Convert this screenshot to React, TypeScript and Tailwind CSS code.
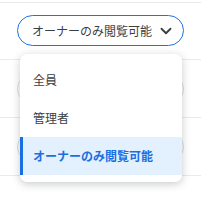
import React from 'react';
import { ChevronDown } from 'lucide-react';

const options = ['全員', '管理者', 'オーナーのみ閲覧可能'];

export default function App() {
  const selected = 2;

  return (
    <div
      className="relative w-[201px] h-[209px] bg-white overflow-hidden"
      style={{ fontFamily: '"Noto Sans CJK JP", "Noto Sans", sans-serif' }}
    >
      <div className="pt-[2px]">
        <div className="border-t border-[#e8eaed]" />
        {/* Trigger */}
        <div className="px-[17px] pt-[12px] pb-[13px]">
          <button className="flex items-center justify-between w-[167px] h-[31px] rounded-full border border-[#1a73e8] pl-[14px] pr-[8px] text-[12px] text-[#3c4043]">
            <span>オーナーのみ閲覧可能</span>
            <ChevronDown size={18} strokeWidth={2.5} className="text-[#3c4043]" />
          </button>
        </div>

        {/* Rows behind the menu */}
        {[0, 1].map((i) => (
          <div key={i} className="border-t border-[#e8eaed] h-[58px] flex items-center px-[17px]">
            <div className="w-[167px] h-[30px] rounded-full border border-[#dadce0]" />
          </div>
        ))}
        <div className="border-t border-[#e8eaed]" />
      </div>

      {/* Dropdown menu */}
      <div className="absolute left-[20px] top-[54px] w-[162px] bg-white rounded-[7px] py-[7px] shadow-[0_2px_8px_rgba(60,64,67,0.28)]">
        {options.map((opt, i) => (
          <div
            key={opt}
            className={
              i === selected
                ? 'h-[38px] flex items-center pl-[10px] border-l-[3px] border-[#1a6fe0] bg-[#e3f0fd] text-[12px] font-bold text-[#1a6fe0]'
                : 'h-[38px] flex items-center pl-[13px] text-[12px] text-[#3c4043]'
            }
          >
            {opt}
          </div>
        ))}
      </div>
    </div>
  );
}
